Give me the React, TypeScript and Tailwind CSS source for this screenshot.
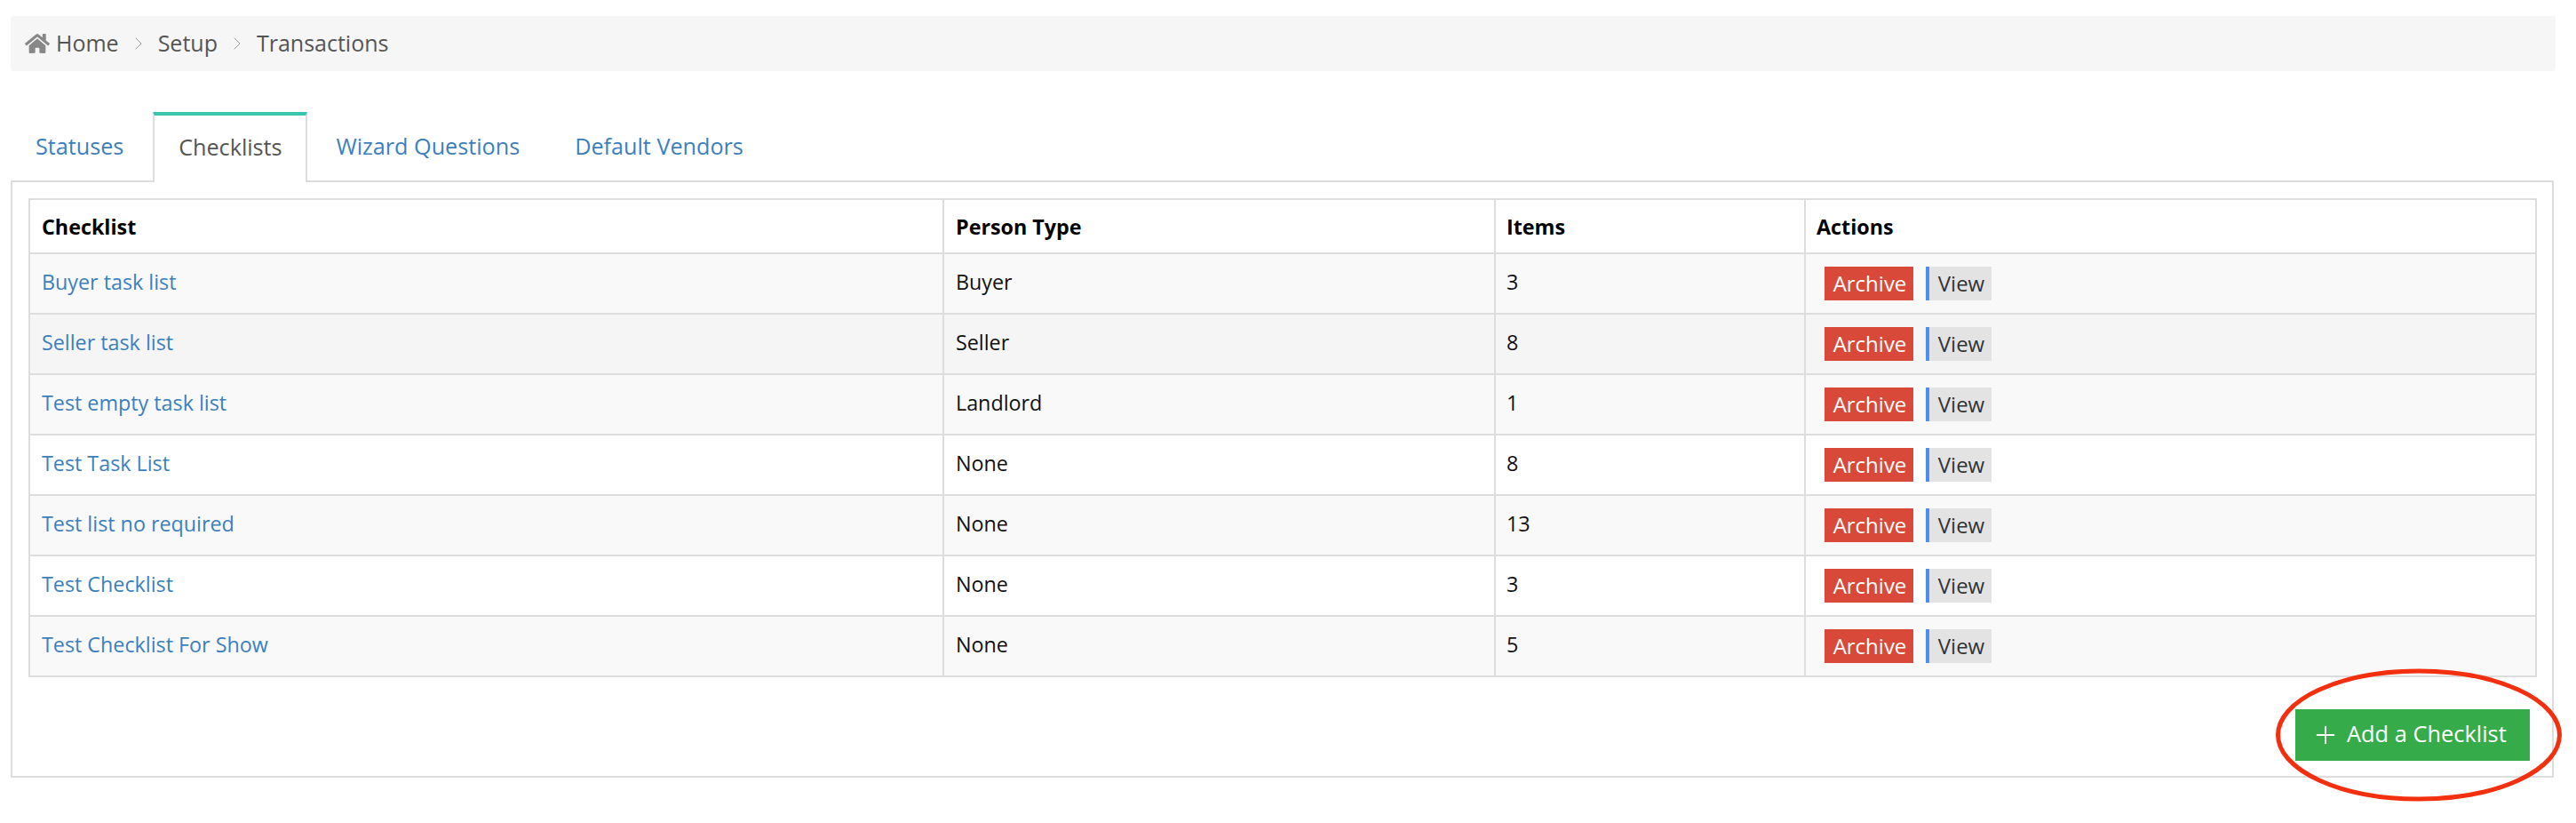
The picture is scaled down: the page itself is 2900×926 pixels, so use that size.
import React from 'react'
import { FaHome } from 'react-icons/fa'
import { ChevronRight, Plus } from 'lucide-react'

const rows = [
  { name: 'Buyer task list', type: 'Buyer', items: 3, bg: 'bg-[#f9f9f9]' },
  { name: 'Seller task list', type: 'Seller', items: 8, bg: 'bg-[#f5f5f5]' },
  { name: 'Test empty task list', type: 'Landlord', items: 1, bg: 'bg-[#f9f9f9]' },
  { name: 'Test Task List', type: 'None', items: 8, bg: 'bg-white' },
  { name: 'Test list no required', type: 'None', items: 13, bg: 'bg-[#f9f9f9]' },
  { name: 'Test Checklist', type: 'None', items: 3, bg: 'bg-white' },
  { name: 'Test Checklist For Show', type: 'None', items: 5, bg: 'bg-[#f9f9f9]' },
]

export default function App(): React.ReactElement {
  return (
    <div className="h-[926px] w-[2900px] overflow-hidden bg-white px-3 pt-[18px] font-['Open_Sans',sans-serif] text-[25px] text-[#555]">
      {/* Breadcrumb */}
      <div className="flex h-[62px] w-[2865px] items-center rounded-[3px] bg-[#f6f6f6] pl-4">
        <FaHome className="mr-[7px] h-[28px] w-[28px] text-[#888]" />
        <span>Home</span>
        <ChevronRight className="mx-[10px] h-6 w-6 text-[#999]" strokeWidth={1} />
        <span>Setup</span>
        <ChevronRight className="mx-[10px] h-6 w-6 text-[#999]" strokeWidth={1} />
        <span>Transactions</span>
      </div>

      {/* Tabs */}
      <div className="mt-[46px] flex h-[77px] items-stretch text-[25.2px] text-[#3d7fbd]">
        <a className="flex items-center pr-[33px] pl-[28px]">Statuses</a>
        <div className="relative z-10 flex h-[79px] w-[174px] items-center justify-center border-x-2 border-t-4 border-x-[#ddd] border-t-[#37c4ac] bg-white pb-[4px] text-[#555]">
          Checklists
        </div>
        <a className="flex items-center pr-[31px] pl-[32px]">Wizard Questions</a>
        <a className="flex items-center pl-[31px]">Default Vendors</a>
      </div>

      {/* Panel */}
      <div className="relative h-[672px] w-[2863px] border-2 border-[#ddd] pt-[18px] pl-[18px] text-[23.3px]">
        <table className="w-[2824px] table-fixed border-collapse border-2 border-[#ddd]">
          <colgroup>
            <col className="w-[1029px]" />
            <col className="w-[621px]" />
            <col className="w-[349px]" />
            <col />
          </colgroup>
          <thead>
            <tr className="h-[61px] text-left font-bold text-black">
              <th className="border-2 border-[#ddd] pt-[2px] pl-[13px]">Checklist</th>
              <th className="border-2 border-[#ddd] pt-[2px] pl-[13px]">Person Type</th>
              <th className="border-2 border-[#ddd] pt-[2px] pl-[12px]">Items</th>
              <th className="border-2 border-[#ddd] pt-[2px] pl-[12px]">Actions</th>
            </tr>
          </thead>
          <tbody>
            {rows.map((row) => (
              <tr key={row.name} className={`h-[68px] ${row.bg}`}>
                <td className="border-2 border-[#ddd] pb-[3px] pl-[13px] text-[#3d7fbd]">
                  <a>{row.name}</a>
                </td>
                <td className="border-2 border-[#ddd] pb-[3px] pl-[13px] text-[#111]">{row.type}</td>
                <td className="border-2 border-[#ddd] pb-[3px] pl-[12px] text-[#111]">{row.items}</td>
                <td className="border-2 border-[#ddd] pl-[21px] text-[24px]">
                  <div className="flex items-center gap-[14px]">
                    <span className="flex h-[38px] w-[100px] items-center justify-center bg-[#d9493a] pl-[2px] text-white">
                      Archive
                    </span>
                    <span className="flex h-[38px] w-[74px] items-center justify-center border-l-4 border-[#4f8ef0] bg-[#e3e3e3] pl-[2px] text-[#333]">
                      View
                    </span>
                  </div>
                </td>
              </tr>
            ))}
          </tbody>
        </table>

        <div className="mt-[36px] flex justify-end pr-[25px]">
          <button className="flex h-[58px] w-[264px] items-center gap-2 bg-[#36ab4a] pb-[3px] pl-[18px] text-[25.4px] text-white">
            <Plus className="mt-[3px] h-8 w-8" strokeWidth={1.5} />
            Add a Checklist
          </button>
        </div>

        {/* Red annotation circled over the button */}
        <svg className="absolute top-[547px] left-[2547px] overflow-visible" width="324" height="150" fill="none">
          <ellipse cx="162" cy="75" rx="158.5" ry="72" stroke="#f2300f" strokeWidth="5" />
        </svg>
      </div>
    </div>
  )
}
